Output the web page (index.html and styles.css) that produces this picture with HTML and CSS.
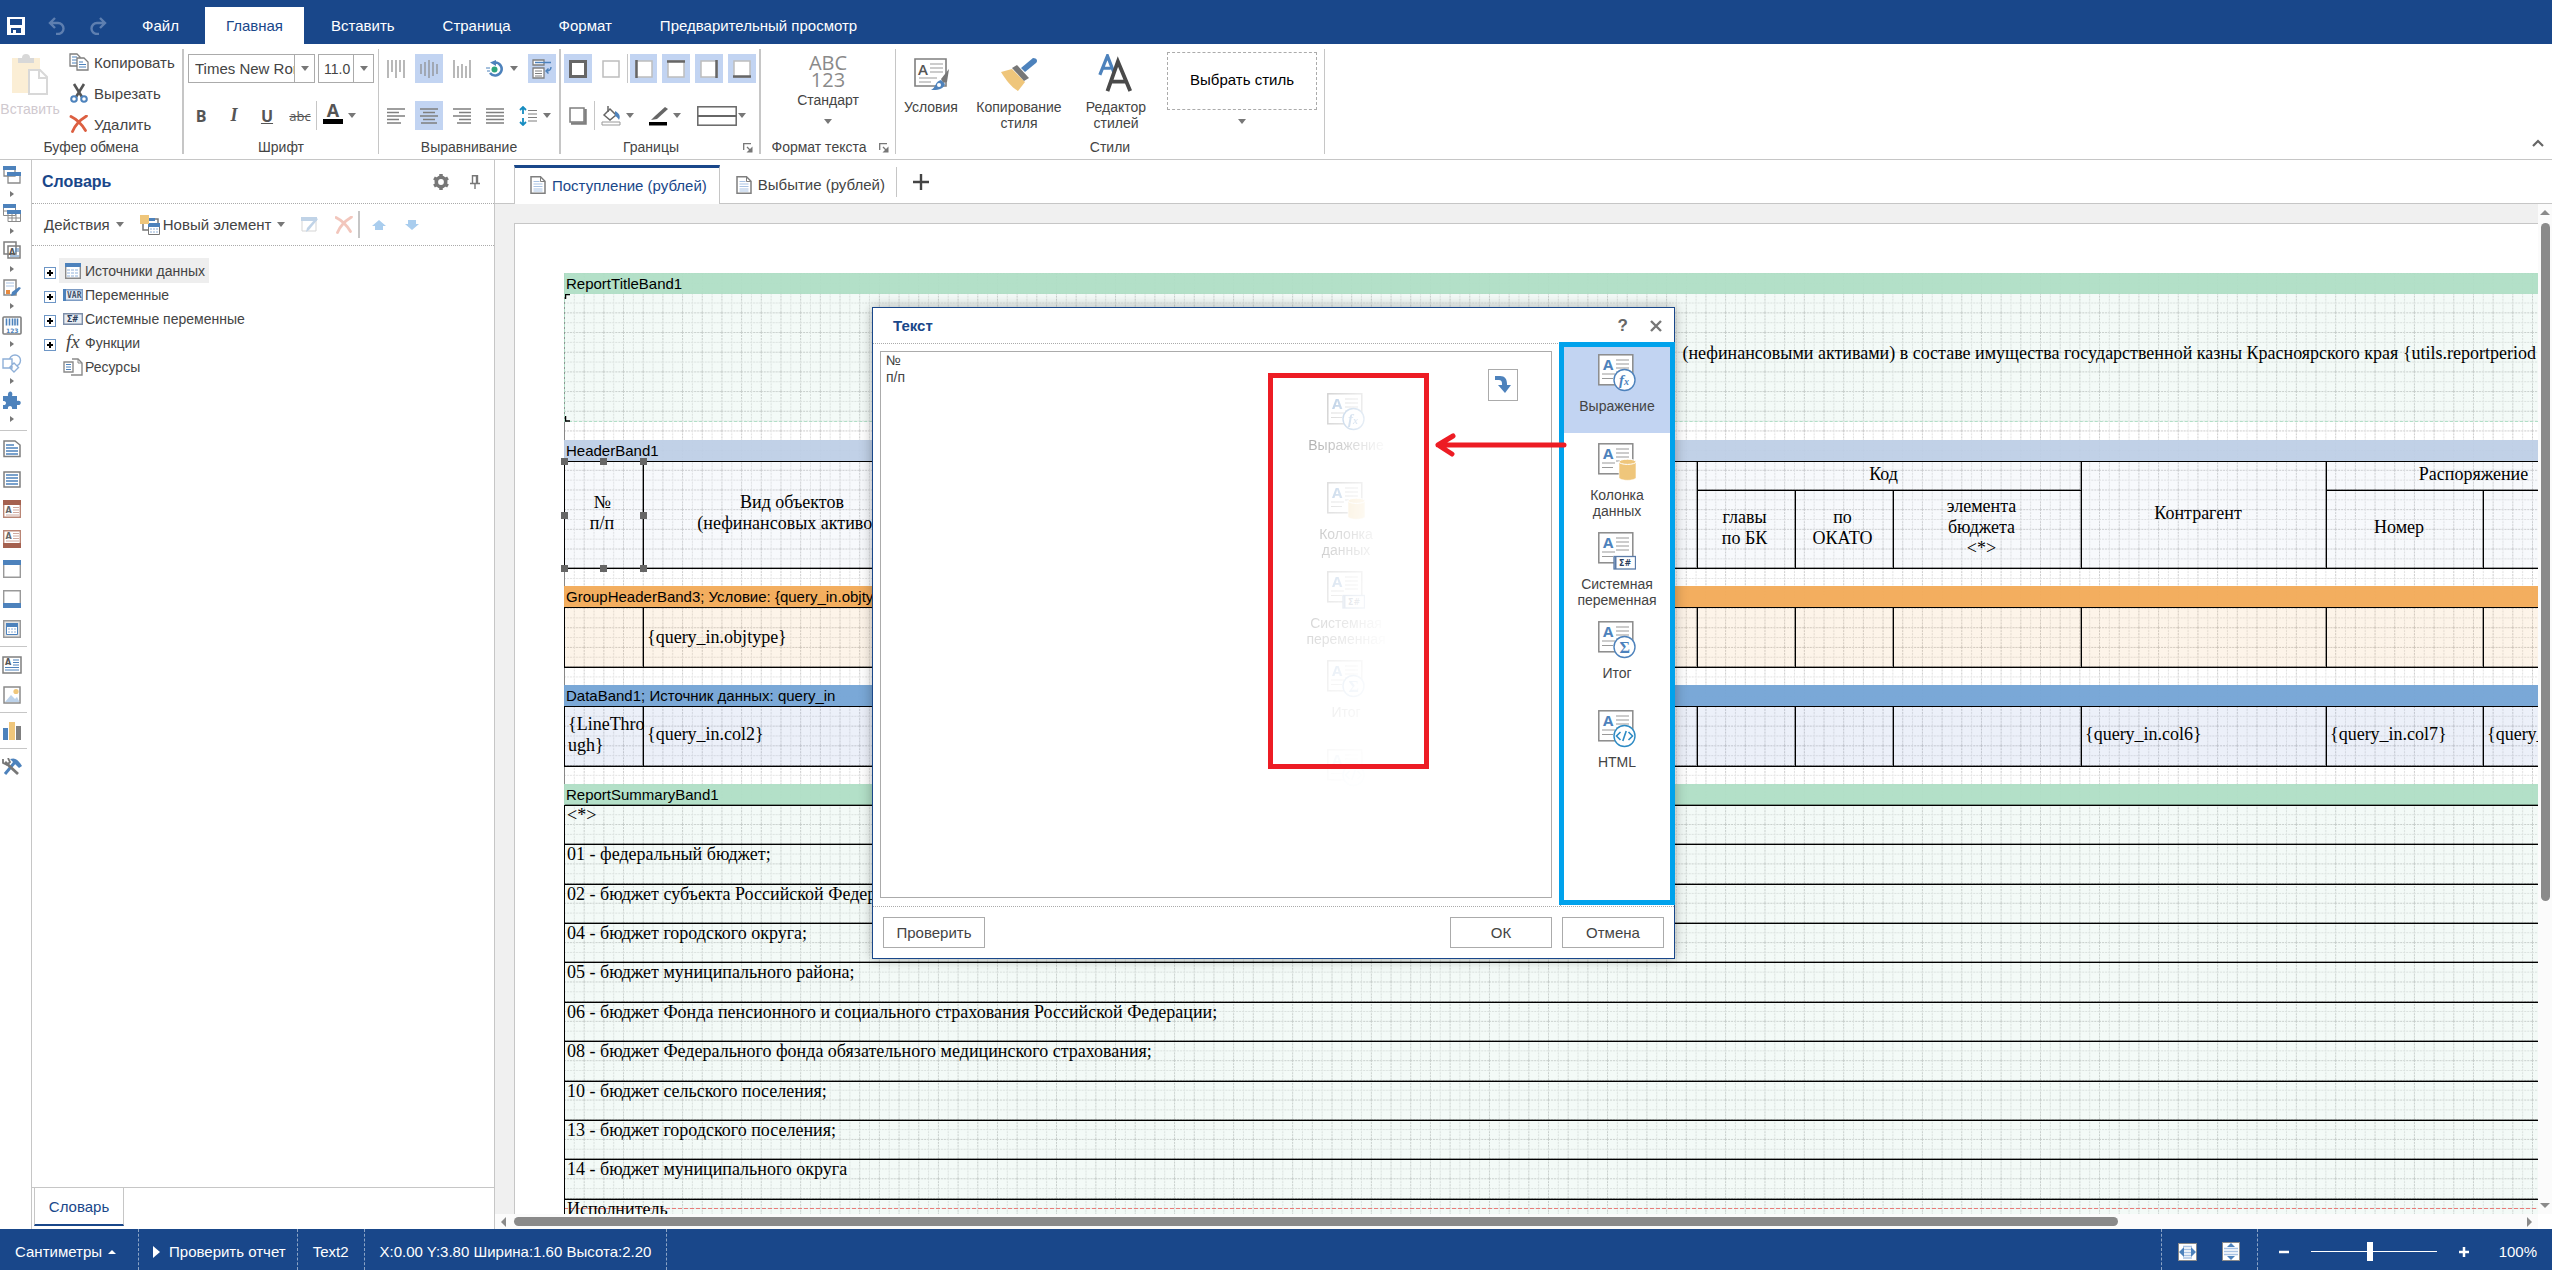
FILE: index.html
```html
<!DOCTYPE html>
<html lang="ru">

<head>
    <meta charset="UTF-8">
    <meta name="viewport" content="width=device-width, initial-scale=1.0">
    <title>Дизайнер отчетов</title>
    <link rel="stylesheet" href="styles.css">
</head>

<body>
    <!-- Shared icons -->
    <svg class="sprite" aria-hidden="true">
        <symbol id="i-doc" viewBox="0 0 16 18">
            <path d="M1 .8h9.5L15 5.3v11.9H1z" fill="#fff" stroke="#7f7f7f" stroke-width="1.5" />
            <path d="M10.5 1v4.5H15" fill="none" stroke="#7f7f7f" />
            <path d="M3.5 5.5h6M3.5 8h9M3.5 10.5h9M3.5 13h9M3.5 15h9" stroke="#a9c3e4" />
        </symbol>
        <symbol id="i-text-base" viewBox="0 0 38 38">
            <rect x=".8" y=".8" width="34" height="30" fill="#fff" stroke="#8a8a8a" stroke-width="1.5" />
            <text x="5" y="16" font-family="Open Sans" font-weight="700" font-size="15" fill="#4d82bc">A</text>
            <path d="M18 6h13M18 10h13M18 14h13M18 18h13M4 20h13M4 24.5h11" stroke="#999" />
        </symbol>
        <symbol id="i-expression" viewBox="0 0 38 38">
            <use href="#i-text-base" />
            <circle cx="26.5" cy="26" r="10.5" fill="#fff" stroke="#4d82bc" stroke-width="1.4" />
            <text x="21" y="31" font-family="Liberation Serif" font-style="italic" font-weight="700" font-size="15" fill="#4d82bc">f<tspan font-size="10">x</tspan></text>
        </symbol>
        <symbol id="i-column" viewBox="0 0 38 38">
            <use href="#i-text-base" />
            <path d="M21 18.5v16c0 1.5 4 2.8 8.5 2.8s8.5-1.3 8.5-2.8v-16z" fill="#efc67b" stroke="#fff" stroke-width=".6" />
            <ellipse cx="29.5" cy="18.8" rx="8.5" ry="2.6" fill="#efc67b" stroke="#fff" />
        </symbol>
        <symbol id="i-system" viewBox="0 0 38 38">
            <use href="#i-text-base" />
            <rect x="16" y="24.5" width="21.5" height="12.5" fill="#fff" stroke="#5a7ba8" stroke-width="1.3" />
            <path d="M17.5 25v12" stroke="#5a7ba8" stroke-width="2" />
            <text x="21" y="34" font-family="DejaVu Sans" font-weight="700" font-size="8" fill="#2c3e5c">Σ#</text>
        </symbol>
        <symbol id="i-total" viewBox="0 0 38 38">
            <use href="#i-text-base" />
            <circle cx="26.5" cy="26" r="10.5" fill="#fff" stroke="#4d82bc" stroke-width="1.4" />
            <text x="21.5" y="31.5" font-family="Liberation Serif" font-weight="700" font-size="16" fill="#4d82bc">Σ</text>
        </symbol>
        <symbol id="i-html" viewBox="0 0 38 38">
            <use href="#i-text-base" />
            <circle cx="26.5" cy="26" r="10.5" fill="#fff" stroke="#2e8bc4" stroke-width="1.4" />
            <path d="M22.5 22l-4 4 4 4M30.5 22l4 4-4 4M28.2 21l-3.4 10" fill="none" stroke="#2e8bc4" stroke-width="1.6" />
        </symbol>
        <symbol id="i-cross" viewBox="0 0 18 18">
            <path d="M1 1.5c6 3 11 8 14.5 14M16.5 1C10 5 5 10 2.5 16.5" fill="none" stroke="#dc5f41" stroke-width="2.8" stroke-linecap="round" />
        </symbol>
        <symbol id="i-box" viewBox="0 0 18 18">
            <rect x="1" y="1" width="16" height="16" fill="#fff" stroke="#bdbdbd" stroke-width="1.5" />
        </symbol>
        <symbol id="i-launch" viewBox="0 0 10 10">
            <path d="M.7 7V.7H8M4 4l3 3" fill="none" stroke="#777" stroke-width="1.3" />
            <path d="M9.5 3.5v6h-6z" fill="#777" />
        </symbol>
    </svg>

    <header class="menubar">
        <button class="menu-icon" aria-label="Сохранить"><svg width="18" height="18" viewBox="0 0 18 18"><path fill="#fff" fill-rule="evenodd" d="M0 0h18v18H0zM3 2v6h12V2zM4 11v5h2v-3h3v3h5v-5z" /></svg></button>
        <button class="menu-icon" aria-label="Отменить"><svg width="18" height="18" viewBox="0 0 18 18"><path d="M7 1L2 6l5 5M2 6h8a5.500 5.500 0 0 1 0 11H8" fill="none" stroke="#5e7fb0" stroke-width="2.4" /></svg></button>
        <button class="menu-icon" aria-label="Повторить"><svg width="18" height="18" viewBox="0 0 18 18"><path d="M11 1l5 5-5 5M16 6H8a5.500 5.500 0 0 0 0 11h2" fill="none" stroke="#5e7fb0" stroke-width="2.4" /></svg></button>
        <nav class="menu">
            <a href="#">Файл</a>
            <a href="#" class="active">Главная</a>
            <a href="#">Вставить</a>
            <a href="#">Страница</a>
            <a href="#">Формат</a>
            <a href="#">Предварительный просмотр</a>
        </nav>
    </header>

    <section class="ribbon">
        <div class="group clipboard">
            <div class="group-body">
                <button class="big-button disabled" disabled>
                    <svg width="38" height="42" viewBox="0 0 38 42"><path d="M1 4h28v35H1z" fill="#fbeed5" /><path d="M7 9V4h4a4 4 0 0 1 8 0h4v5z" fill="#d8d8d8" /><path d="M18 16h11l7 7v17H18z" fill="#fff" stroke="#d8d8d8" stroke-width="2" /><path d="M28 16v8h8" fill="none" stroke="#d8d8d8" stroke-width="2" /></svg>
                    <span>Вставить</span>
                </button>
                <div class="clip-list">
                    <button class="clip-button"><svg width="20" height="18" viewBox="0 0 20 18"><path d="M1 1h7l3 3v9H1z" fill="#fff" stroke="#7f7f7f" stroke-width="1.3" /><path d="M3 4h5M3 7h5M3 10h5" stroke="#4d82bc" /><path d="M8 5h7l4 4v8H8z" fill="#fff" stroke="#7f7f7f" stroke-width="1.3" /><path d="M10 9h4M10 11.5h7M10 14h7" stroke="#4d82bc" /></svg>Копировать</button>
                    <button class="clip-button"><svg width="20" height="20" viewBox="0 0 20 20"><path d="M5 1l8 13M15 1L7 14" stroke="#555" stroke-width="2.6" /><circle cx="5" cy="16" r="2.8" fill="none" stroke="#4d82bc" stroke-width="2" /><circle cx="15" cy="16" r="2.8" fill="none" stroke="#4d82bc" stroke-width="2" /></svg>Вырезать</button>
                    <button class="clip-button"><svg width="20" height="18"><use href="#i-cross" /></svg>Удалить</button>
                </div>
            </div>
            <div class="group-title">Буфер обмена</div>
        </div>

        <div class="group font">
            <div class="group-body rows">
                <div class="row tight">
                    <div class="combo family"><input type="text" aria-label="Шрифт" value="Times New Roman"><button class="arrow" aria-label="Список шрифтов"></button></div>
                    <div class="combo size"><input type="text" aria-label="Размер" value="11.0"><button class="arrow" aria-label="Список размеров"></button></div>
                </div>
                <div class="row">
                    <button class="tool"><b>B</b></button>
                    <button class="tool"><i>I</i></button>
                    <button class="tool"><u>U</u></button>
                    <button class="tool strike"><s>abc</s></button>
                    <span class="sep"></span>
                    <span class="split"><button class="tool color-a">A</button><button class="arrow" aria-label="Цвет текста"></button></span>
                </div>
            </div>
            <div class="group-title">Шрифт</div>
        </div>

        <div class="group align">
            <div class="group-body rows">
                <div class="row">
                    <button class="tool" aria-label="По верхнему краю"><svg width="18" height="18"><path d="M1 0v18M5 0v12M9 0v18M13 0v12M17 0v18" stroke="#8a8a8a" stroke-width="1.2" /></svg></button>
                    <button class="tool on" aria-label="По середине"><svg width="18" height="18"><path d="M1 4v10M5 2v14M9 0v18M13 2v14M17 4v10" stroke="#8a8a8a" stroke-width="1.2" /></svg></button>
                    <button class="tool" aria-label="По нижнему краю"><svg width="18" height="18"><path d="M1 0v18M5 6v12M9 4v14M13 6v12M17 0v18" stroke="#8a8a8a" stroke-width="1.2" /></svg></button>
                    <span class="split"><button class="tool" aria-label="Поворот"><svg width="18" height="18" viewBox="0 0 18 18"><path d="M9 2.5a6.500 6.500 0 1 1-5 10.500" fill="none" stroke="#4d82bc" stroke-width="2.6" /><path d="M10 0v6L4 2.5z" fill="#4d82bc" /><circle cx="8.5" cy="9.500" r="3" fill="#2ea57c" /><path d="M0 8h4M1 11h3" stroke="#4d82bc" /></svg></button><button class="arrow" aria-label="Угол поворота"></button></span>
                    <button class="tool on" aria-label="Перенос слов"><svg width="20" height="20" viewBox="0 0 20 20"><path d="M1 1h11v5H1z" fill="#fff" stroke="#7f7f7f" stroke-width="1.3" /><path d="M3 3.5h16" stroke="#4d82bc" stroke-width="1.5" /><path d="M1 9h11v10H1z" fill="#fff" stroke="#7f7f7f" stroke-width="1.3" /><path d="M3 12h7M3 14.5h7M3 17h7" stroke="#7f7f7f" /><path d="M19 8c0 3-2 4-5 4M16.5 9.500L14 12l2.500 2.500" fill="none" stroke="#4d82bc" stroke-width="1.4" /></svg></button>
                </div>
                <div class="row">
                    <button class="tool" aria-label="По левому краю"><svg width="18" height="16"><path d="M0 1h18M0 4.500h12M0 8h18M0 11.500h12M0 15h14" stroke="#7f7f7f" stroke-width="1.3" /></svg></button>
                    <button class="tool on" aria-label="По центру"><svg width="18" height="16"><path d="M0 1h18M3 4.500h12M0 8h18M3 11.500h12M1 15h16" stroke="#7f7f7f" stroke-width="1.3" /></svg></button>
                    <button class="tool" aria-label="По правому краю"><svg width="18" height="16"><path d="M0 1h18M6 4.500h12M0 8h18M6 11.500h12M4 15h14" stroke="#7f7f7f" stroke-width="1.3" /></svg></button>
                    <button class="tool" aria-label="По ширине"><svg width="18" height="16"><path d="M0 1h18M0 4.500h18M0 8h18M0 11.500h18M0 15h18" stroke="#7f7f7f" stroke-width="1.3" /></svg></button>
                    <span class="split"><button class="tool" aria-label="Межстрочный интервал"><svg width="18" height="20" viewBox="0 0 18 20"><path d="M4 1v7M4 12v7M1 4l3-3 3 3M1 16l3 3 3-3" fill="none" stroke="#168cc0" stroke-width="1.8" /><path d="M9 4.500h9M9 8h9M9 11.500h9M9 15h9" stroke="#7f7f7f" stroke-width="1.2" /></svg></button><button class="arrow" aria-label="Интервал"></button></span>
                </div>
            </div>
            <div class="group-title">Выравнивание</div>
        </div>

        <div class="group borders">
            <div class="group-body rows">
                <div class="row">
                    <button class="tool on" aria-label="Все границы"><svg width="18" height="18"><rect x="1.5" y="1.5" width="15" height="15" fill="#fff" stroke="#666" stroke-width="3" /></svg></button>
                    <button class="tool" aria-label="Нет границ"><svg width="18" height="18"><use href="#i-box" /></svg></button>
                    <span class="sep"></span>
                    <button class="tool on" aria-label="Левая граница"><svg width="18" height="18"><use href="#i-box" /><path d="M1.5 0v18" stroke="#666" stroke-width="2.5" /></svg></button>
                    <button class="tool on" aria-label="Верхняя граница"><svg width="18" height="18"><use href="#i-box" /><path d="M0 1.5h18" stroke="#666" stroke-width="2.5" /></svg></button>
                    <button class="tool on" aria-label="Правая граница"><svg width="18" height="18"><use href="#i-box" /><path d="M16.5 0v18" stroke="#666" stroke-width="2.5" /></svg></button>
                    <button class="tool on" aria-label="Нижняя граница"><svg width="18" height="18"><use href="#i-box" /><path d="M0 16.5h18" stroke="#666" stroke-width="2.5" /></svg></button>
                </div>
                <div class="row">
                    <button class="tool" aria-label="Тень"><svg width="18" height="18"><path d="M1 1h14v14H1z" fill="#fff" stroke="#7f7f7f" stroke-width="1.5" /><path d="M2 16.5h14.5V2" fill="none" stroke="#7f7f7f" stroke-width="2.5" /></svg></button>
                    <span class="sep"></span>
                    <span class="split"><button class="tool" aria-label="Заливка"><svg width="20" height="20" viewBox="0 0 20 20"><path d="M3 9l6-6 6 6-6 5z" fill="#fff" stroke="#666" stroke-width="1.5" /><path d="M7 0v6" stroke="#666" stroke-width="1.5" /><path d="M14 5c4 2 6 5 4 9-1-2-2-3-4-4z" fill="#4d82bc" /><path d="M1 16h18v3H1z" fill="#fff" stroke="#999" /></svg></button><button class="arrow" aria-label="Цвет заливки"></button></span>
                    <span class="split"><button class="tool" aria-label="Цвет границы"><svg width="20" height="20" viewBox="0 0 20 20"><path d="M17 1L7 10l-4 4 6-1L20 3z" fill="#666" /><path d="M1 16h18v3.500H1z" fill="#000" /></svg></button><button class="arrow" aria-label="Цвет"></button></span>
                    <span class="split"><button class="tool line-style" aria-label="Стиль границы"><svg width="40" height="20"><rect x=".8" y=".8" width="38.4" height="18.4" fill="#fff" stroke="#666" stroke-width="1.5" /><path d="M1 10h38" stroke="#666" stroke-width="2" /></svg></button><button class="arrow" aria-label="Стиль"></button></span>
                </div>
            </div>
            <div class="group-title">Границы<button class="launch" aria-label="Границы"><svg width="10" height="10"><use href="#i-launch" /></svg></button></div>
        </div>

        <div class="group text-format">
            <div class="group-body">
                <button class="big-button"><span class="abc">ABC<br>123</span><span>Стандарт</span><i class="caret"></i></button>
            </div>
            <div class="group-title">Формат текста<button class="launch" aria-label="Формат текста"><svg width="10" height="10"><use href="#i-launch" /></svg></button></div>
        </div>

        <div class="group styles">
            <div class="group-body">
                <button class="big-button w-cond">
                    <svg width="38" height="38" viewBox="0 0 38 38"><path d="M3 5h31v27H3z" fill="#fff" stroke="#7f7f7f" stroke-width="1.6" /><text x="6" y="21" font-family="Open Sans" font-size="15" font-weight="600" fill="#555">A</text><path d="M18 10h13M18 14h13M18 18h13M7 24h18M7 28h12" stroke="#999" /><path d="M37 15l-2 13-4 1-2-4z" fill="#777" /><path d="M29 26l4 4c-2 6-8 6-14 6 5-2 4-9 10-10z" fill="#4d82bc" /><circle cx="27" cy="31" r="2" fill="#fff" /></svg>
                    <span>Условия</span>
                </button>
                <button class="big-button w-copy">
                    <svg width="38" height="38" viewBox="0 0 38 38"><path d="M1 18l11-3 13 13-7 9C11 33 6 26 1 18z" fill="#efc67b" /><path d="M17 11l12 13-5 3L12 14z" fill="#777" /><path d="M25 18l-4-4L33 4c4 0 5 3 3 5z" fill="#4d82bc" /></svg>
                    <span>Копирование стиля</span>
                </button>
                <button class="big-button w-edit">
                    <svg width="38" height="38" viewBox="0 0 38 40"><path d="M2 22L10 2l7 18M4.500 15h9" fill="none" stroke="#4d82bc" stroke-width="3.4" /><path d="M10 39l11-31 13 31M14 29h15" fill="none" stroke="#4a4a4a" stroke-width="4" /></svg>
                    <span>Редактор стилей</span>
                </button>
                <button class="style-gallery"><span class="style-box">Выбрать стиль</span><i class="caret"></i></button>
            </div>
            <div class="group-title">Стили</div>
        </div>

        <button class="collapse" aria-label="Свернуть ленту"><svg width="12" height="8"><path d="M1 7l5-5 5 5" fill="none" stroke="#666" stroke-width="2.2" /></svg></button>
    </section>

    <main class="workspace">
        <aside class="toolbox">
            <div class="tool-menus">
                <button class="tool-menu" aria-label="Бэнды"><svg width="18" height="18"><path d="M1 1h11v9H1zM5 7h12v10H5z" fill="#fff" stroke="#8a8a8a" stroke-width="1.3" /><path d="M0 0h13v4H0zM4 6h14v4H4z" fill="#4d82bc" /></svg></button>
                <button class="tool-menu" aria-label="Кросс-бэнды"><svg width="18" height="18"><path d="M.5.5h12v11H.5zM5 7h12.500v10.500H5z" fill="#fff" stroke="#8a8a8a" /><path d="M0 0h13v4H0zM4 6h14v4H4z" fill="#4d82bc" /><path d="M5 14h12M9 10v7M13 10v7M1 7h3" stroke="#8a8a8a" /></svg></button>
                <button class="tool-menu" aria-label="Компоненты"><svg width="18" height="18"><path d="M1 1h12v12H1zM5 5h12v12H5z" fill="#fff" stroke="#7f7f7f" stroke-width="1.5" /><text x="6" y="14" font-family="DejaVu Sans" font-weight="700" font-size="8" fill="#555">A</text><path d="M12 8h4M12 10h4M7 15h9" stroke="#4d82bc" /></svg></button>
                <button class="tool-menu" aria-label="Подпись"><svg width="18" height="18"><path d="M1 1h12v15H1z" fill="#fff" stroke="#8a8a8a" stroke-width="1.5" /><path d="M3 4h8M3 7h8" stroke="#a9c3e4" /><path d="M18 9l-6 7-4 1 1-4 7-5z" fill="#4d82bc" /><path d="M3 11h4v4H3z" fill="#e88a3c" /></svg></button>
                <button class="tool-menu" aria-label="Штрих-коды"><svg width="20" height="19"><rect x="1" y="1" width="18" height="17" rx="1" fill="#fff" stroke="#7f7f7f" stroke-width="1.6" /><path d="M4.500 2.500v7M7.500 2.500v7M10.500 2.500v7M13 2.500v7M15.500 2.500v7" stroke="#4d82bc" stroke-width="1.6" /><text x="4" y="16.500" font-family="DejaVu Sans" font-weight="700" font-size="6" fill="#4d82bc">123</text></svg></button>
                <button class="tool-menu" aria-label="Фигуры"><svg width="20" height="19"><circle cx="13" cy="6.500" r="5.500" fill="#fff" stroke="#8fb0d8" stroke-width="1.4" /><path d="M1 5h9v9H1zM12 9l4.500 4.500-4.500 4.500-4.500-4.500z" fill="#fff" stroke="#8fb0d8" stroke-width="1.4" /></svg></button>
                <button class="tool-menu" aria-label="Плагины"><svg width="18" height="18"><path d="M0 5h5c-1-6 6-6 4 0h5v5c5-2 5 5 0 4v4H9c1-4-5-4-4 0H0v-4c4 1 4-5 0-4z" fill="#4d82bc" /></svg></button>
            </div>
            <hr>
            <button class="band-tool" aria-label="Заголовок отчета"><svg width="18" height="18"><path d="M1 1h11l5 4v11.500H1z" fill="#fff" stroke="#7f7f7f" stroke-width="1.5" /><path d="M3 5h8M3 8h12M3 11h12M3 14h12" stroke="#4d82bc" stroke-width="1.4" /></svg></button>
            <button class="band-tool" aria-label="Итог отчета"><svg width="18" height="18"><path d="M1 2h16v15H1z" fill="#fff" stroke="#7f7f7f" stroke-width="1.5" /><path d="M3 5h12M3 8h12M3 11h12M3 14h12" stroke="#4d82bc" stroke-width="1.4" /></svg></button>
            <button class="band-tool" aria-label="Заголовок страницы"><svg width="18" height="18"><path d="M.7.7h16.600v16.600H.7z" fill="#fff" stroke="#b98575" stroke-width="1.4" /><path d="M0 0h18v5H0z" fill="#a5614f" /><text x="2.500" y="13" font-family="DejaVu Sans" font-weight="700" font-size="8" fill="#666">A</text><path d="M10 7.500h6M10 10h6M10 12.500h6M3 15h13" stroke="#cfaaa0" /></svg></button>
            <button class="band-tool" aria-label="Итог страницы"><svg width="18" height="18"><path d="M.7.7h16.600v16.600H.7z" fill="#fff" stroke="#b98575" stroke-width="1.4" /><path d="M0 13h18v5H0z" fill="#a5614f" /><text x="2.500" y="9" font-family="DejaVu Sans" font-weight="700" font-size="8" fill="#666">A</text><path d="M10 3.500h6M10 6h6M10 8.500h6M3 11h13" stroke="#cfaaa0" /></svg></button>
            <button class="band-tool" aria-label="Заголовок"><svg width="18" height="18"><path d="M.7.7h16.600v16.600H.7z" fill="#fff" stroke="#999" stroke-width="1.4" /><path d="M0 0h18v5H0z" fill="#4d82bc" /></svg></button>
            <button class="band-tool" aria-label="Итог"><svg width="18" height="18"><path d="M.7.7h16.600v16.600H.7z" fill="#fff" stroke="#999" stroke-width="1.4" /><path d="M0 13h18v5H0z" fill="#4d82bc" /></svg></button>
            <button class="band-tool" aria-label="Данные"><svg width="18" height="18"><path d="M.7.7h16.600v16.600H.7z" fill="#e4e4e4" stroke="#999" stroke-width="1.4" /><path d="M3.500 3.500h11v11h-11z" fill="#fff" stroke="#4d82bc" /><path d="M3 3h12v4H3z" fill="#4d82bc" /><path d="M5 9h8M5 12h8" stroke="#8fb0d8" stroke-dasharray="2 1" /></svg></button>
            <hr>
            <button class="band-tool" aria-label="Текст"><svg width="20" height="18"><path d="M1 1h18v16H1z" fill="#fff" stroke="#7f7f7f" stroke-width="1.5" /><text x="3" y="9" font-family="DejaVu Sans" font-weight="700" font-size="8" fill="#555">A</text><path d="M11 4h6M11 6.500h6M11 9h6M3 11.500h14M3 14h14" stroke="#4d82bc" /></svg></button>
            <button class="band-tool" aria-label="Изображение"><svg width="18" height="18"><path d="M1 1h16v16H1z" fill="#fff" stroke="#8a8a8a" stroke-width="1.5" /><circle cx="13" cy="5.500" r="2.600" fill="#efc67b" /><path d="M2 16l6-7 4 4 2-2 2.500 5z" fill="#bcd2ea" /></svg></button>
            <hr>
            <button class="band-tool" aria-label="Диаграмма"><svg width="18" height="18"><path d="M0 6h5v12H0z" fill="#4d82bc" /><path d="M6 0h6v18H6z" fill="#efc67b" /><path d="M13 4h5v14h-5z" fill="#7f7f7f" /></svg></button>
            <hr>
            <button class="band-tool" aria-label="Настройка"><svg width="20" height="18"><path d="M3 16L13 4" stroke="#4d82bc" stroke-width="3" /><path d="M8 1c6-2 8 1 12 7l-3 2-3-3-3-3z" fill="#4d82bc" /><path d="M3 4l13 12" stroke="#777" stroke-width="2.8" /><path d="M1 1v4l4 2 3-3-2-4" fill="none" stroke="#777" stroke-width="1.8" /></svg></button>
        </aside>

        <section class="dictionary">
            <div class="panel-header">
                <h2>Словарь</h2>
                <button class="plain" aria-label="Настройки"><svg width="16" height="16" viewBox="0 0 16 16"><circle cx="8" cy="8" r="4.700" fill="none" stroke="#777" stroke-width="3.600" /><path d="M8 0v16M1 4l14 8M1 12l14-8" stroke="#777" stroke-width="3.500" /><circle cx="8" cy="8" r="2.900" fill="#fff" /></svg></button>
                <button class="plain" aria-label="Закрепить"><svg width="10" height="14" viewBox="0 0 10 14"><path d="M2.500 8V.7h5V8M0 8.500h10M5 9v5" fill="none" stroke="#777" stroke-width="1.4" /><path d="M6.800 1v7" stroke="#777" stroke-width="2" /></svg></button>
            </div>
            <div class="panel-toolbar">
                <button class="plain">Действия<i class="caret"></i></button>
                <button class="plain new-item"><svg width="20" height="20" viewBox="0 0 20 20"><path d="M3 9v6h5M8 4h10v8" fill="none" stroke="#777" stroke-width="1.5" /><path d="M9 3h6v3H9zM8 8h12v4H8z" fill="#4d82bc" /><path d="M8.500 12v7.500h11V12" fill="#fff" stroke="#777" /><path d="M10 14h8M10 17h8" stroke="#8fb0d8" stroke-dasharray="2 1" /><path d="M0 0h9v9H0z" fill="#efc67b" /></svg>Новый элемент<i class="caret"></i></button>
                <button class="plain faded" aria-label="Редактировать"><svg width="18" height="18"><path d="M1 2h14v13H1z" fill="#fff" stroke="#8a8a8a" /><path d="M0 1h16v4H0z" fill="#4d82bc" /><path d="M17 3L8 14l-3 2 1-4 9-10z" fill="#4d82bc" /></svg></button>
                <button class="plain faded" aria-label="Удалить"><svg width="18" height="18"><use href="#i-cross" /></svg></button>
                <span class="sep"></span>
                <button class="plain move" aria-label="Вверх"><svg width="14" height="10"><path d="M7 0l7 6h-3v4H3V6H0z" fill="#a9cdee" /></svg></button>
                <button class="plain move" aria-label="Вниз"><svg width="14" height="10"><path d="M7 10l7-6h-3V0H3v4H0z" fill="#a9cdee" /></svg></button>
            </div>
            <ul class="tree">
                <li><span class="expander"></span><span class="node selected"><svg width="20" height="16"><path d="M2.700.7h14.600v14.600H2.700z" fill="#fff" stroke="#8a8a8a" stroke-width="1.4" /><path d="M2 0h16v4H2z" fill="#4d82bc" /><path d="M4 7h12M4 10h12M4 13h12" stroke="#8fb0d8" stroke-dasharray="3 1" /></svg>Источники данных</span></li>
                <li><span class="expander"></span><span class="node"><svg width="20" height="12"><path d="M.7.7h18.600v10.600H.7z" fill="#e4ecf6" stroke="#7d9cc4" stroke-width="1.4" /><path d="M1.500 0v12" stroke="#4d82bc" stroke-width="3" /><text x="4" y="9" font-family="DejaVu Sans Mono" font-weight="700" font-size="8" fill="#44546a">VAR</text></svg>Переменные</span></li>
                <li><span class="expander"></span><span class="node"><svg width="20" height="12"><path d="M.7.7h18.600v10.600H.7z" fill="#e9edf3" stroke="#7d8ea8" stroke-width="1.4" /><text x="4" y="9" font-family="DejaVu Sans Mono" font-weight="700" font-size="9" fill="#2c3e5c">Σ#</text></svg>Системные переменные</span></li>
                <li><span class="expander"></span><span class="node"><svg width="20" height="18"><text x="3" y="14" font-family="Liberation Serif" font-style="italic" font-size="19" fill="#444">fx</text></svg>Функции</span></li>
                <li><span class="expander none"></span><span class="node"><svg width="20" height="18"><path d="M9 1h6l4 4v12H8" fill="#fff" stroke="#8a8a8a" stroke-width="1.4" /><path d="M15 1v4h4" fill="none" stroke="#8a8a8a" /><path d="M1 4h9v10H1z" fill="#fff" stroke="#8a8a8a" stroke-width="1.4" /><path d="M3 6.500h5M3 9h5M3 11.500h5" stroke="#4d82bc" /></svg>Ресурсы</span></li>
            </ul>
            <div class="panel-tabs"><button class="panel-tab">Словарь</button></div>
        </section>

        <section class="designer">
            <div class="page-tabs">
                <button class="page-tab active"><svg width="16" height="18"><use href="#i-doc" /></svg>Поступление (рублей)</button>
                <button class="page-tab"><svg width="16" height="18"><use href="#i-doc" /></svg>Выбытие (рублей)</button>
                <button class="add-page" aria-label="Добавить страницу"><svg width="16" height="16"><path d="M8 0v16M0 8h16" stroke="#444" stroke-width="2.400" /></svg></button>
            </div>
            <div class="canvas">
                <div class="page">
                    <div class="bands">
                        <svg class="grid" aria-hidden="true">
                            <defs>
                                <pattern id="cells" width="19.68" height="19.68" patternUnits="userSpaceOnUse">
                                    <path d="M.5 0v19.68M0 .5h19.68" stroke="#cbcbcb" stroke-dasharray="2 1" />
                                    <path d="M10.3 0v19.68M0 10.3h19.68" stroke="#e2e2e2" stroke-dasharray="2 1" />
                                </pattern>
                            </defs>
                            <rect width="100%" height="100%" fill="url(#cells)" />
                            <path d="M.5 0v1200" stroke="#888" />
                            <path d="M0 935.500h2100" stroke="#f26c6c" stroke-dasharray="4 2" />
                        </svg>

                        <div class="band green">
                            <div class="band-title">ReportTitleBand1</div>
                            <div class="band-body title-body">
                                <svg class="corners" aria-hidden="true"><path d="M.5 5V.5H5M.5 122v5H5" fill="none" stroke="#000" stroke-width="1.5" /></svg>
                                <span>(нефинансовыми активами) в составе имущества государственной казны Красноярского края {utils.reportperiod</span>
                            </div>
                        </div>

                        <div class="band blue">
                            <div class="band-title">HeaderBand1</div>
                            <div class="band-body">
                                <table class="cells head">
                                    <colgroup><col class="c-num"><col class="c-kind"><col class="c-mid"><col class="c-code"><col class="c-code"><col class="c-elem"><col class="c-agent"><col class="c-order"><col class="c-date"></colgroup>
                                    <tr class="r-top">
                                        <th rowspan="2">№<br>п/п</th>
                                        <th rowspan="2">Вид объектов<br>(нефинансовых активов)</th>
                                        <th rowspan="2"></th>
                                        <th colspan="3" class="wide">Код</th>
                                        <th rowspan="2" class="wide">Контрагент</th>
                                        <th colspan="2">Распоряжение</th>
                                    </tr>
                                    <tr>
                                        <th>главы<br>по БК</th>
                                        <th>по<br>ОКАТО</th>
                                        <th class="wide">элемента<br>бюджета<br>&lt;*&gt;</th>
                                        <th class="wide">Номер</th>
                                        <th></th>
                                    </tr>
                                </table>
                                <svg class="handles" aria-hidden="true"><path d="M0 0h7v7H0zM39 0h7v7h-7zM79 0h7v7h-7zM0 54h7v7H0zM79 54h7v7h-7zM0 107h7v7H0zM39 107h7v7h-7zM79 107h7v7h-7z" fill="#666" /></svg>
                            </div>
                        </div>

                        <div class="band orange">
                            <div class="band-title">GroupHeaderBand3; Условие: {query_in.objtype}</div>
                            <div class="band-body">
                                <table class="cells">
                                    <colgroup><col class="c-num"><col class="c-kind"><col class="c-mid"><col class="c-code"><col class="c-code"><col class="c-elem"><col class="c-agent"><col class="c-order"><col class="c-date"></colgroup>
                                    <tr><td></td><td>{query_in.objtype}</td><td></td><td></td><td></td><td></td><td></td><td></td><td></td></tr>
                                </table>
                            </div>
                        </div>

                        <div class="band data">
                            <div class="band-title">DataBand1; Источник данных: query_in</div>
                            <div class="band-body">
                                <table class="cells">
                                    <colgroup><col class="c-num"><col class="c-kind"><col class="c-mid"><col class="c-code"><col class="c-code"><col class="c-elem"><col class="c-agent"><col class="c-order"><col class="c-date"></colgroup>
                                    <tr><td>{LineThro<br>ugh}</td><td>{query_in.col2}</td><td></td><td></td><td></td><td></td><td>{query_in.col6}</td><td>{query_in.col7}</td><td>{query_in.col8}</td></tr>
                                </table>
                            </div>
                        </div>

                        <div class="band green">
                            <div class="band-title">ReportSummaryBand1</div>
                            <ul class="band-body summary">
                                <li>&lt;*&gt;</li>
                                <li>01 - федеральный бюджет;</li>
                                <li>02 - бюджет субъекта Российской Федерации;</li>
                                <li>04 - бюджет городского округа;</li>
                                <li>05 - бюджет муниципального района;</li>
                                <li>06 - бюджет Фонда пенсионного и социального страхования Российской Федерации;</li>
                                <li>08 - бюджет Федерального фонда обязательного медицинского страхования;</li>
                                <li>10 - бюджет сельского поселения;</li>
                                <li>13 - бюджет городского поселения;</li>
                                <li>14 - бюджет муниципального округа</li>
                                <li>Исполнитель</li>
                            </ul>
                        </div>
                    </div>
                </div>
            </div>
            <div class="scroll-y"><i class="up"></i><div class="thumb"></div><i class="down"></i></div>
            <div class="scroll-x"><i class="left"></i><div class="thumb"></div><i class="right"></i></div>
        </section>
    </main>

    <footer class="statusbar">
        <button class="status-item units">Сантиметры<i class="caret up"></i></button>
        <button class="status-item check-report"><i class="play"></i>Проверить отчет</button>
        <span class="status-item">Text2</span>
        <span class="status-item">X:0.00 Y:3.80 Ширина:1.60 Высота:2.20</span>
        <span class="fit">
            <button class="plain" aria-label="По ширине страницы"><svg width="19" height="18"><rect x=".5" y=".5" width="18" height="17" fill="#fff" stroke="#8a8a8a" /><path d="M5 3.500h9M5 6.500h9M5 9.500h9M5 12.500h9M5 15h9" stroke="#a9c3e4" stroke-width="1.5" /><path d="M1 9l5-5v10zM18 9l-5-5v10z" fill="#4d82bc" /></svg></button>
            <button class="plain" aria-label="По высоте страницы"><svg width="18" height="19"><rect x=".5" y=".5" width="17" height="18" fill="#fff" stroke="#8a8a8a" /><path d="M2 6.500h14M2 9.500h14M2 12.500h14" stroke="#a9c3e4" stroke-width="1.5" /><path d="M9 1l4 4H5zM9 18l4-4H5z" fill="#4d82bc" /></svg></button>
        </span>
        <span class="zoom">
            <button class="plain" aria-label="Уменьшить"><svg width="10" height="10"><path d="M0 5h10" stroke="#fff" stroke-width="2.500" /></svg></button>
            <input type="range" aria-label="Масштаб" min="0" max="200" value="94">
            <button class="plain" aria-label="Увеличить"><svg width="10" height="10"><path d="M0 5h10M5 0v10" stroke="#fff" stroke-width="2.500" /></svg></button>
            <span class="zoom-value">100%</span>
        </span>
    </footer>

    <div class="dialog" role="dialog" aria-labelledby="dialogTitle">
        <div class="dialog-header">
            <h2 id="dialogTitle">Текст</h2>
            <button class="plain help">?</button>
            <button class="plain" aria-label="Закрыть"><svg width="12" height="12"><path d="M1 1l10 10M11 1L1 11" stroke="#777" stroke-width="2.400" /></svg></button>
        </div>
        <div class="dialog-main">
            <div class="editor">
                <textarea aria-label="Текст">№
п/п</textarea>
                <button class="insert" aria-label="Вставить выражение"><svg width="17" height="18" viewBox="0 0 17 18"><path d="M0 0h5c5 0 7 3 7 8v1h4l-6 8-7-8h4V8c0-3-1-4-3-4H0z" fill="#4d82bc" /></svg></button>
            </div>
            <div class="side">
                <button class="side-item on"><svg width="38" height="38"><use href="#i-expression" /></svg><span>Выражение</span></button>
                <button class="side-item"><svg width="38" height="38"><use href="#i-column" /></svg><span>Колонка данных</span></button>
                <button class="side-item"><svg width="38" height="38"><use href="#i-system" /></svg><span>Системная переменная</span></button>
                <button class="side-item"><svg width="38" height="38"><use href="#i-total" /></svg><span>Итог</span></button>
                <button class="side-item"><svg width="38" height="38"><use href="#i-html" /></svg><span>HTML</span></button>
            </div>
        </div>
        <div class="dialog-footer">
            <button class="push check">Проверить</button>
            <button class="push">ОК</button>
            <button class="push">Отмена</button>
        </div>

        <!-- Faded copy of the side list -->
        <div class="ghost">
            <div class="side-item"><svg width="38" height="38"><use href="#i-expression" /></svg><span>Выражение</span></div>
            <div class="side-item"><svg width="38" height="38"><use href="#i-column" /></svg><span>Колонка данных</span></div>
            <div class="side-item"><svg width="38" height="38"><use href="#i-system" /></svg><span>Системная переменная</span></div>
            <div class="side-item"><svg width="38" height="38"><use href="#i-total" /></svg><span>Итог</span></div>
            <div class="side-item"><svg width="38" height="38"><use href="#i-html" /></svg></div>
        </div>
        <div class="frame red"></div>
        <div class="frame cyan"></div>
        <svg class="pointer" width="134" height="26" viewBox="0 0 134 26" aria-hidden="true"><path d="M3 13h126M18 4L3 13l14 9" fill="none" stroke="#ed1c24" stroke-width="5" stroke-linecap="round" stroke-linejoin="round" /></svg>
    </div>
</body>

</html>
```
FILE: styles.css
```css
* {
    box-sizing: border-box;
}

body {
    margin: 0;
    height: 100vh;
    display: flex;
    flex-direction: column;
    overflow: hidden;
    position: relative;
    background: white;
    color: #444;
    font-family: "Liberation Sans", Arial, sans-serif;
    font-size: 15px;
}

button,
input,
textarea {
    font: inherit;
    color: inherit;
}

button {
    border: none;
    padding: 0;
    background: none;
    cursor: pointer;
}

svg {
    display: block;
    flex: none;
}

.sprite {
    display: none;
}

.plain {
    display: flex;
    align-items: center;
}

.caret {
    border: 4px solid transparent;
    border-top: 5px solid #777;
    border-bottom: none;
}

.sep {
    align-self: stretch;
    width: 1px;
    margin: 0 -3px;
    background: #c6c6c6;
}

/* Top menu */
.menubar {
    display: flex;
    flex: none;
    align-items: flex-end;
    height: 44px;
    padding-left: 7px;
    background: #19478a;
    color: white;
}

.menu-icon {
    width: 18px;
    height: 37px;
    margin-right: 23px;
}

.menu {
    display: flex;
    margin-left: -12px;
}

.menu a {
    height: 37px;
    padding: 0 24px;
    line-height: 38px;
    color: white;
    text-decoration: none;
}

.menu a.active {
    margin: 0 3px 0 2px;
    padding: 0 21px;
    background: white;
    color: #19478a;
}

/* Ribbon */
.ribbon {
    position: relative;
    display: flex;
    flex: none;
    height: 116px;
    padding: 5px 0;
    border-bottom: 1px solid #c6c6c6;
}

.group {
    display: flex;
    flex-direction: column;
    flex: none;
    border-right: 1px solid #c6c6c6;
}

.clipboard {
    width: 184px;
    border-right-width: 2px;
}

.font {
    width: 195px;
}

.align {
    width: 182px;
    border-right-width: 2px;
}

.borders {
    width: 200px;
    border-right-width: 2px;
}

.text-format {
    width: 135px;
}

.styles {
    width: 429px;
}

.group-body {
    display: flex;
    flex: 1;
}

.group-body.rows {
    flex-direction: column;
    gap: 18px;
    padding: 5px 3px 0;
}

.group-title {
    position: relative;
    height: 14px;
    line-height: 14px;
    font-size: 14px;
    text-align: center;
}

.borders .group-title,
.text-format .group-title {
    padding-right: 18px;
}

.launch {
    position: absolute;
    right: 6px;
    top: 3px;
}

.row {
    display: flex;
    gap: 5px;
    height: 29px;
}

.row.tight {
    gap: 3px;
    padding-left: 1px;
}

.tool {
    display: flex;
    align-items: center;
    justify-content: center;
    width: 28px;
    height: 29px;
    font-family: "Open Sans", sans-serif;
    font-size: 16px;
    color: #555;
}

.tool.on {
    background: #c2d4f2;
}

.tool i {
    font-family: "Liberation Serif", serif;
    font-weight: bold;
    font-size: 18px;
}

.tool u {
    font-weight: bold;
}

.tool.strike {
    font-size: 13px;
}

.tool.color-a {
    height: 23px;
    border-bottom: 5px solid black;
    width: 20px;
    margin: 0 4px;
    font-size: 18px;
    font-weight: bold;
    line-height: 18px;
}

.tool.line-style {
    width: 46px;
    justify-content: flex-end;
}

.split {
    display: flex;
}

.arrow {
    display: flex;
    align-items: center;
    justify-content: center;
    width: 14px;
    height: 29px;
}

.arrow::after {
    content: "";
    border: 4px solid transparent;
    border-top: 5px solid #777;
    border-bottom: none;
}

.split .arrow {
    justify-content: flex-start;
    padding-left: 1px;
}

.combo {
    display: flex;
    border: 1px solid #ababab;
}

.combo input {
    flex: 1;
    min-width: 0;
    padding: 0 0 0 6px;
    border: none;
    outline: none;
}

.combo .arrow {
    width: 20px;
    height: 27px;
    border-left: 1px solid #ababab;
}

.combo.family {
    width: 127px;
}

.combo.size {
    width: 56px;
}

.combo.size input {
    padding-left: 5px;
    font-size: 14px;
}

.big-button {
    display: flex;
    flex-direction: column;
    align-items: center;
    font-size: 14px;
    line-height: 16px;
}

.big-button.disabled {
    width: 60px;
    padding-top: 5px;
    color: #d0c9cf;
    gap: 5px;
}

.clip-list {
    display: flex;
    flex-direction: column;
    gap: 5px;
    margin-left: 9px;
}

.clip-button {
    display: flex;
    align-items: center;
    gap: 5px;
    height: 26px;
}

.text-format .big-button {
    width: 100%;
    padding-top: 5px;
}

.abc {
    margin-bottom: 4px;
    font-family: "Open Sans", sans-serif;
    font-size: 20px;
    line-height: 17px;
    color: #8a8a8a;
}

.text-format .caret {
    margin-top: 11px;
}

.styles .group-body {
    gap: 12px;
    padding-left: 5px;
}

.styles .big-button {
    padding-top: 5px;
    gap: 7px;
}

.w-cond {
    width: 60px;
}

.w-copy {
    width: 92px;
}

.w-edit {
    width: 78px;
}

.style-gallery {
    display: flex;
    flex-direction: column;
    align-items: center;
    gap: 9px;
    width: 150px;
    padding-top: 3px;
    color: black;
}

.style-box {
    width: 150px;
    height: 58px;
    border: 1px dashed #ababab;
    line-height: 53px;
}

.collapse {
    position: absolute;
    right: 8px;
    bottom: 12px;
}

/* Workspace */
.workspace {
    display: flex;
    flex: 1;
    min-height: 0;
}

.toolbox {
    display: flex;
    flex-direction: column;
    flex: none;
    width: 32px;
    padding-top: 5px;
    border-right: 1px solid #c6c6c6;
}

.tool-menus {
    display: flex;
    flex-direction: column;
    height: 263px;
}

.tool-menu {
    display: flex;
    flex: 1;
    flex-direction: column;
    align-items: center;
    justify-content: space-between;
    width: 24px;
    padding: 1px 0 6px;
}

.tool-menu::after {
    content: "";
    border: 3px solid transparent;
    border-left: 4px solid #777;
    border-right: none;
}

.toolbox hr {
    width: 27px;
    height: 1px;
    margin: 2px 0 3px;
    border: none;
    background: #c6c6c6;
}

.band-tool {
    display: flex;
    align-items: center;
    justify-content: center;
    width: 24px;
    height: 30px;
}

/* Dictionary panel */
.dictionary {
    display: flex;
    flex-direction: column;
    flex: none;
    width: 463px;
    border-right: 1px solid #c6c6c6;
}

.panel-header {
    display: flex;
    align-items: center;
    gap: 21px;
    height: 44px;
    padding: 0 14px 0 10px;
    border-bottom: 1px dotted #ababab;
}

.panel-header h2 {
    flex: 1;
    margin: 0;
    font-size: 16px;
    color: #19478a;
}

.panel-toolbar {
    display: flex;
    align-items: center;
    height: 42px;
    padding: 7px 12px;
    gap: 16px;
    border-bottom: 1px dotted #ababab;
}

.panel-toolbar .caret {
    margin-left: 6px;
}

.new-item svg {
    margin-right: 3px;
}

.panel-toolbar .sep {
    width: 2px;
    margin: 0 -7px 0 -11px;
}

.faded {
    opacity: 0.35;
}

.move {
    margin-left: 3px;
}

.tree {
    flex: 1;
    margin: 0;
    padding: 12px 0 0 12px;
    list-style: none;
    font-size: 14px;
}

.tree li {
    display: flex;
    align-items: center;
    height: 25px;
    margin-bottom: -1px;
}

.expander {
    width: 12px;
    height: 12px;
    margin: 4px 3px 0 0;
    border: 1px solid #6d96c6;
    background: linear-gradient(black, black) center / 6px 2px no-repeat, linear-gradient(black, black) center / 2px 6px no-repeat;
}

.expander.none {
    visibility: hidden;
}

.node {
    display: flex;
    align-items: center;
    gap: 2px;
    height: 25px;
    padding: 0 4px;
}

.node.selected {
    background: #eee;
}

.panel-tabs {
    height: 42px;
    padding-left: 2px;
    border-top: 1px solid #c6c6c6;
}

.panel-tab {
    width: 90px;
    height: 38px;
    border: 1px solid #c6c6c6;
    border-top: none;
    border-bottom: 2px solid #19478a;
    color: #19478a;
}

/* Report designer */
.designer {
    display: grid;
    flex: 1;
    min-width: 0;
    grid-template-columns: minmax(0, 1fr) 14px;
    grid-template-rows: 44px minmax(0, 1fr) 15px;
}

.page-tabs {
    display: flex;
    grid-column: 1 / 3;
    padding: 5px 0 0 19px;
    border-bottom: 1px solid #c6c6c6;
}

.page-tab {
    display: flex;
    align-items: center;
    gap: 6px;
    height: 30px;
    margin-top: 2px;
    padding: 5px 11px 0 16px;
    border-right: 1px solid #c6c6c6;
}

.page-tab.active {
    height: 39px;
    margin: 0;
    padding: 0 12px 2px 15px;
    border: 1px solid #c6c6c6;
    border-top: 3px solid #19478a;
    border-bottom: none;
    background: white;
    color: #19478a;
}

.add-page {
    height: 34px;
    padding: 0 16px;
}

.canvas {
    overflow: hidden;
    padding: 19px 0 0 19px;
    background: #f0f0f0;
}

.page {
    height: 100%;
    padding: 49px 0 0 49px;
    border: 1px solid #c6c6c6;
    border-right: none;
    border-bottom: none;
    background: white;
}

.bands {
    position: relative;
    display: flex;
    flex-direction: column;
    gap: 18px;
    height: 100%;
    color: black;
    font-family: "Liberation Serif", "Times New Roman", serif;
    font-size: 18px;
    line-height: 21px;
}

.grid {
    position: absolute;
    inset: 0;
    width: 100%;
    height: 100%;
}

.band {
    position: relative;
    flex: none;
}

.band-title {
    height: 21px;
    padding-left: 2px;
    font-family: "Liberation Sans", Arial, sans-serif;
    font-size: 15px;
    line-height: 22px;
}

.band-body {
    position: relative;
}

.green .band-title {
    background: rgba(174, 222, 197, 0.94);
}

.green .band-body {
    background: rgba(177, 223, 199, 0.15);
}

.blue .band-title {
    background: rgba(189, 206, 230, 0.94);
}

.blue .band-body {
    height: 107px;
    background: rgba(189, 206, 230, 0.12);
}

.orange .band-title {
    background: rgba(242, 171, 88, 0.96);
}

.orange .band-body {
    height: 60px;
    background: rgba(242, 171, 88, 0.13);
}

.data .band-title {
    background: rgba(117, 164, 213, 0.96);
}

.data .band-body {
    height: 60px;
    background: rgba(117, 150, 213, 0.14);
}

.title-body {
    display: flex;
    align-items: center;
    justify-content: flex-end;
    height: 128px;
    padding: 0 2px 8px 0;
    border: 1px dashed #b1dfc7;
    border-top: none;
    border-right: none;
    white-space: nowrap;
}

.corners {
    position: absolute;
    left: 0;
    top: 0;
    width: 10px;
    height: 128px;
}

.cells {
    table-layout: fixed;
    width: 2060px;
    height: 61px;
    border-collapse: collapse;
}

.cells.head {
    height: 108px;
}

.cells th,
.cells td {
    padding: 0 3px;
    border: 1px solid black;
    box-shadow: inset -1px -1px rgba(0, 0, 0, 0.35);
    font-weight: normal;
    text-align: left;
    white-space: nowrap;
}

.cells th {
    padding: 0 4px 4px 0;
    text-align: center;
}

.cells th.wide {
    padding-right: 12px;
}

.data .cells td {
    padding-bottom: 4px;
}

.r-top {
    height: 29px;
}

.c-num {
    width: 79px;
}

.c-kind {
    width: 301px;
}

.c-mid {
    width: 753px;
}

.c-code {
    width: 98px;
}

.c-elem {
    width: 188px;
}

.c-agent {
    width: 245px;
}

.c-order {
    width: 157px;
}

.c-date {
    width: 141px;
}

.handles {
    position: absolute;
    left: -3px;
    top: -3px;
    width: 86px;
    height: 114px;
}

.summary {
    display: grid;
    grid-template-rows: repeat(11, 1fr);
    height: 433px;
    margin: 0;
    padding: 0;
    border-left: 1px solid black;
    list-style: none;
}

.summary li {
    padding-left: 2px;
    border-top: 1px solid black;
    box-shadow: 0 -1px rgba(0, 0, 0, 0.35);
    line-height: 19px;
}

/* Scroll bars */
.scroll-y,
.scroll-x {
    display: flex;
    align-items: center;
    background: #fbfbfb;
}

.scroll-y {
    flex-direction: column;
    padding: 6px 0;
}

.scroll-y .thumb {
    width: 9px;
    height: 678px;
    margin: 8px 0 auto;
    border-radius: 5px;
    background: #8a8a8a;
}

.scroll-x {
    padding: 0 6px;
}

.scroll-x .thumb {
    width: 79%;
    height: 9px;
    margin: 0 auto 0 8px;
    border-radius: 5px;
    background: #8a8a8a;
}

.scroll-y i,
.scroll-x i {
    border: 5px solid transparent;
}

.scroll-y .up {
    border-top: none;
    border-bottom-color: #8a8a8a;
}

.scroll-y .down {
    border-bottom: none;
    border-top-color: #8a8a8a;
}

.scroll-x .left {
    border-left: none;
    border-right-color: #8a8a8a;
}

.scroll-x .right {
    border-right: none;
    border-left-color: #8a8a8a;
}

/* Status bar */
.statusbar {
    display: flex;
    flex: none;
    height: 41px;
    background: #19478a;
    color: white;
}

.status-item {
    display: flex;
    align-items: center;
    padding: 4px 15px 0;
    border-right: 1px dashed #8ba3c5;
}

.caret.up {
    margin-left: 6px;
    border: 4px solid transparent;
    border-top: none;
    border-bottom: 4px solid white;
}

.status-item.units {
    padding-right: 22px;
}

.status-item.check-report {
    padding-right: 11px;
}

.play {
    margin: 0 9px 0 -1px;
    border: 6px solid transparent;
    border-left: 7px solid white;
    border-right: none;
}

.fit {
    display: flex;
    align-items: center;
    gap: 25px;
    margin-left: auto;
    padding: 4px 17px 0 16px;
    border: 1px dashed #8ba3c5;
    border-top: none;
    border-bottom: none;
}

.zoom {
    display: flex;
    align-items: center;
    gap: 22px;
    padding: 4px 15px 0 21px;
}

.zoom input {
    width: 126px;
    height: 19px;
    margin: 0;
    appearance: none;
    background: linear-gradient(white, white) center / 100% 1px no-repeat;
}

.zoom input::-webkit-slider-thumb {
    appearance: none;
    width: 6px;
    height: 19px;
    background: white;
}

.zoom-value {
    margin-left: 8px;
}

/* Text dialog */
.dialog {
    position: absolute;
    left: 872px;
    top: 307px;
    display: flex;
    flex-direction: column;
    width: 803px;
    height: 652px;
    border: 1px solid #19478a;
    background: white;
    box-shadow: 0 0 12px rgba(0, 0, 0, 0.3);
}

.dialog-header {
    display: flex;
    align-items: center;
    gap: 22px;
    height: 36px;
    padding: 0 12px 0 20px;
    border-bottom: 1px dotted #ababab;
}

.dialog-header h2 {
    flex: 1;
    margin: 0;
    font-size: 15px;
    color: #19478a;
}

.help {
    font-weight: bold;
    font-size: 17px;
    color: #666;
}

.dialog-main {
    display: flex;
    flex: 1;
    min-height: 0;
}

.editor {
    position: relative;
    display: flex;
    flex: 1;
    padding: 7px 8px 8px 7px;
}

.editor textarea {
    flex: 1;
    padding: 0 5px;
    border: 1px solid #ababab;
    outline: none;
    resize: none;
    font-size: 14px;
    line-height: 17px;
}

.insert {
    position: absolute;
    right: 42px;
    top: 25px;
    display: flex;
    align-items: center;
    justify-content: center;
    width: 30px;
    height: 32px;
    border: 1px solid #ababab;
}

.side {
    width: 114px;
    padding: 0 5px 0 3px;
    border-left: 1px dotted #ababab;
}

.side-item {
    display: flex;
    flex-direction: column;
    align-items: center;
    gap: 6px;
    width: 106px;
    height: 89px;
    padding-top: 10px;
    font-size: 14px;
    line-height: 16px;
    text-align: center;
}

.side-item.on {
    background: #c2d4f2;
}

.dialog-footer {
    display: flex;
    gap: 10px;
    height: 52px;
    padding: 10px;
    border-top: 1px dotted #ababab;
}

.push {
    width: 102px;
    height: 31px;
    border: 1px solid #ababab;
    background: white;
}

.push.check {
    margin-right: auto;
}

.ghost {
    position: absolute;
    left: 420px;
    top: 75px;
    mask-image: linear-gradient(to right, rgba(0, 0, 0, 0.6), rgba(0, 0, 0, 0.02) 88%), linear-gradient(to bottom, black, transparent 95%);
    mask-composite: intersect;
}

.frame {
    position: absolute;
    border: 5px solid #ed1c24;
    pointer-events: none;
}

.frame.red {
    left: 395px;
    top: 65px;
    width: 161px;
    height: 396px;
}

.frame.cyan {
    right: -1px;
    top: 34px;
    width: 116px;
    height: 563px;
    border-color: #00a2ec;
}

.pointer {
    position: absolute;
    left: 562px;
    top: 124px;
}
```
